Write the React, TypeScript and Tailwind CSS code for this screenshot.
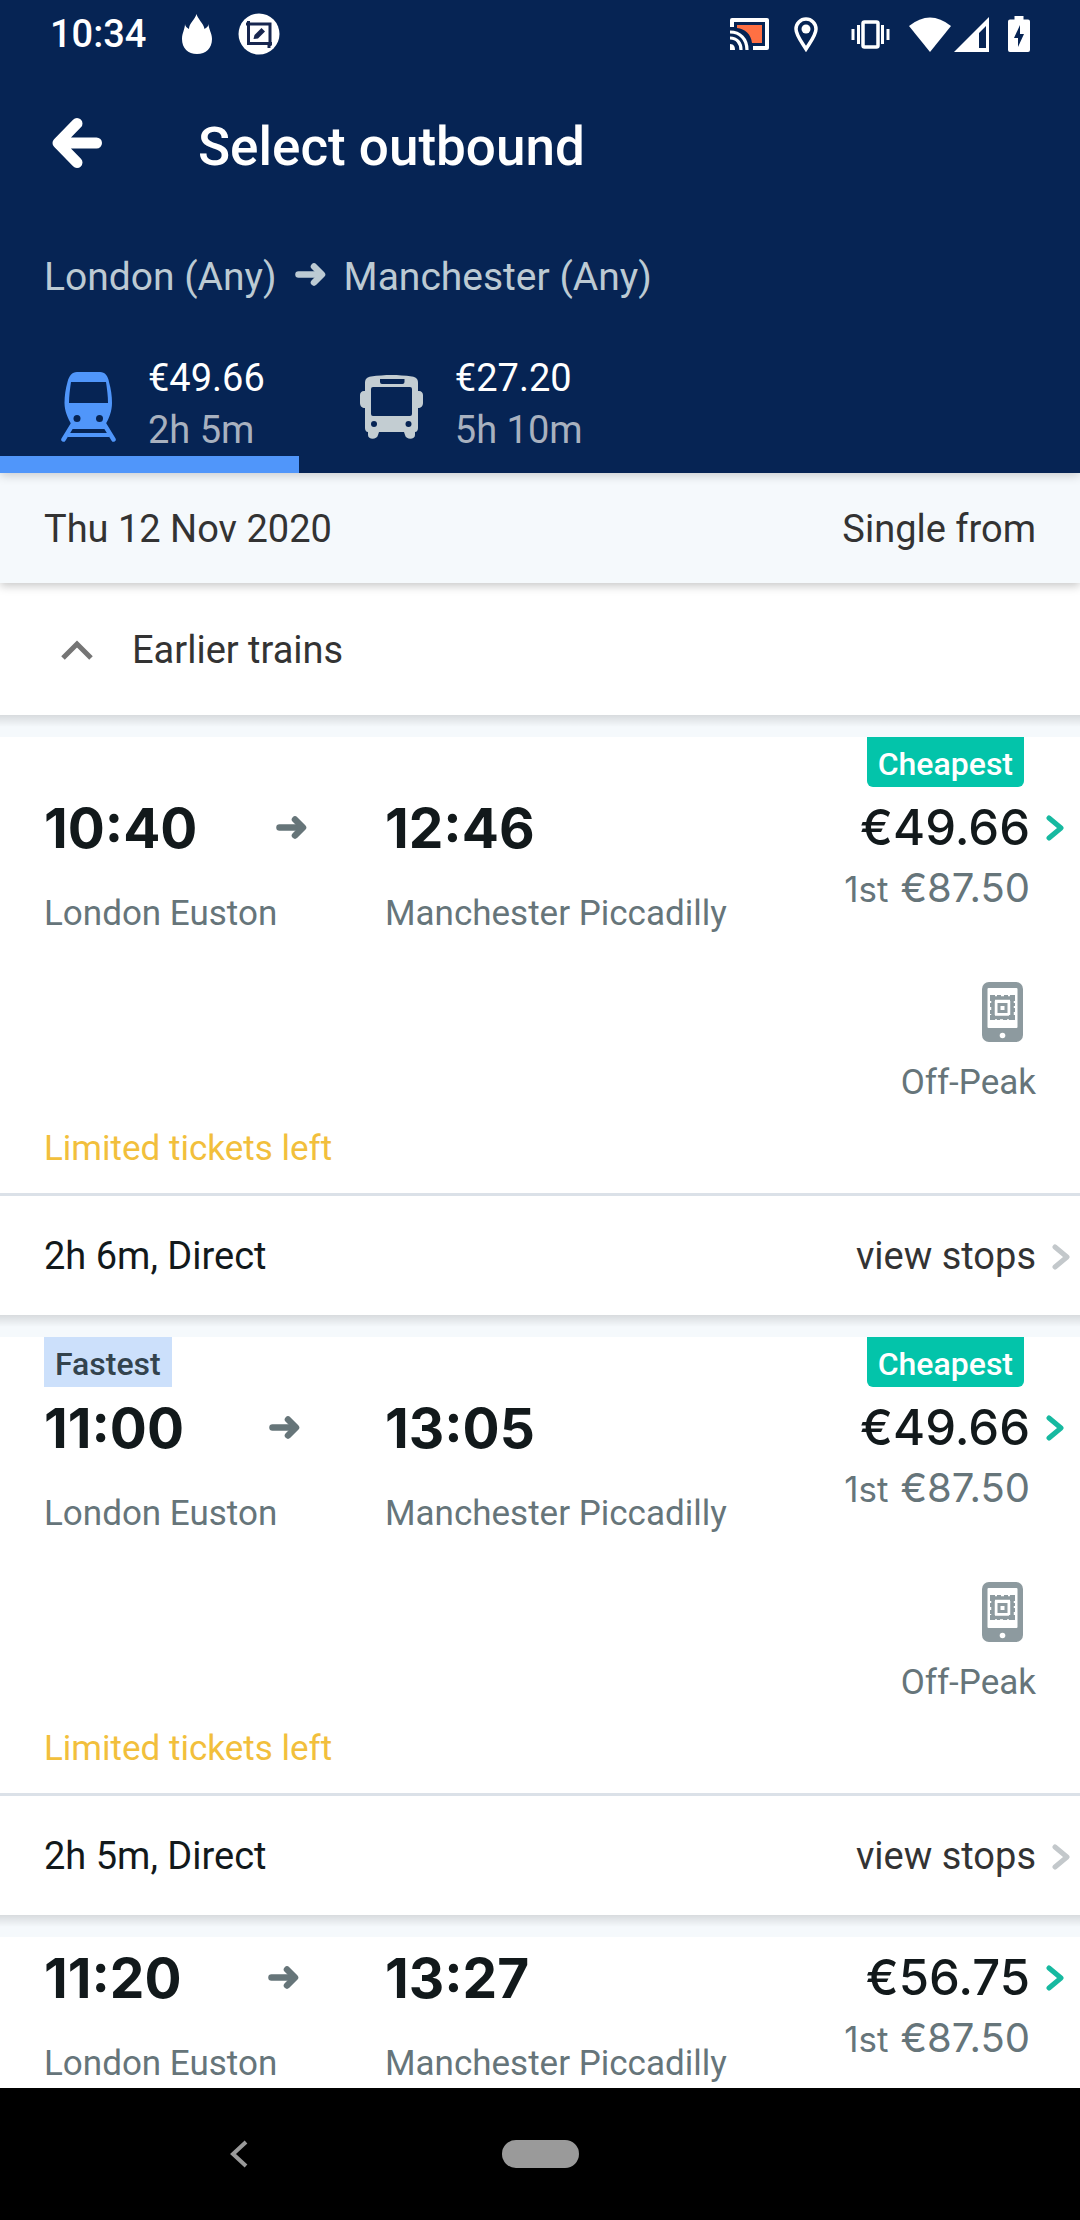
import clsx from 'clsx';

type Journey = {
  departs: string;
  arrives: string;
  from: string;
  to: string;
  price: string;
  firstClass: string;
  fastest?: boolean;
  cheapest?: boolean;
  fareType?: string;
  notice?: string;
  summary?: string;
};

const journeys: Journey[] = [
  {
    departs: '10:40',
    arrives: '12:46',
    from: 'London Euston',
    to: 'Manchester Piccadilly',
    price: '€49.66',
    firstClass: '€87.50',
    cheapest: true,
    fareType: 'Off-Peak',
    notice: 'Limited tickets left',
    summary: '2h 6m, Direct',
  },
  {
    departs: '11:00',
    arrives: '13:05',
    from: 'London Euston',
    to: 'Manchester Piccadilly',
    price: '€49.66',
    firstClass: '€87.50',
    fastest: true,
    cheapest: true,
    fareType: 'Off-Peak',
    notice: 'Limited tickets left',
    summary: '2h 5m, Direct',
  },
  {
    departs: '11:20',
    arrives: '13:27',
    from: 'London Euston',
    to: 'Manchester Piccadilly',
    price: '€56.75',
    firstClass: '€87.50',
  },
];

function ShortArrow({ className }: { className?: string }) {
  return (
    <svg viewBox="0 0 31 24" className={clsx('h-6 w-[31px] shrink-0', className)} fill="none" aria-hidden="true">
      <path d="M3.500 11.500H24" stroke="currentColor" strokeWidth="6.500" strokeLinecap="round" />
      <path d="M19 3.500 27 11.500l-8 8" stroke="currentColor" strokeWidth="6.500" strokeLinecap="round" strokeLinejoin="round" />
    </svg>
  );
}

function Chevron({ className }: { className?: string }) {
  return (
    <svg viewBox="0 0 18 26" className={clsx('h-[26px] w-[18px] shrink-0', className)} fill="none" aria-hidden="true">
      <path d="M3 3 15 13 3 23" stroke="currentColor" strokeWidth="5" strokeLinecap="round" strokeLinejoin="round" />
    </svg>
  );
}

function TrainIcon() {
  return (
    <svg viewBox="0 0 55 70" className="h-[70px] w-[55px] shrink-0" aria-hidden="true">
      <path
        fill="currentColor"
        fillRule="evenodd"
        d="M16 0h23c5 0 8 4 9 10 2 7 3 14 3 21 0 8-3 16-7 22H11C7 47 3.500 39 3.500 31c0-7 1-14 3-21C8 4 11 0 16 0zM10 10C9 17 8 24 8 31h39c0-7-1-14-2-21z"
      />
      <path d="M12 52 2.500 67.500M43 52 52.500 67.500" stroke="currentColor" strokeWidth="4.500" strokeLinecap="round" />
      <path d="M10 55h35M7 63h41" stroke="currentColor" strokeWidth="4" />
      <circle cx="16" cy="46.500" r="3.500" fill="#062454" />
      <circle cx="38.500" cy="46.500" r="3.500" fill="#062454" />
    </svg>
  );
}

function BusIcon() {
  return (
    <svg viewBox="0 0 63 64" className="h-16 w-[63px] shrink-0" aria-hidden="true">
      <path
        fill="currentColor"
        fillRule="evenodd"
        d="M5 8c0-4 2-6 6-6.500C25-.5 38-.5 52 1.500c4 .5 6 2.500 6 6.500v8h1c2.500 0 4 2 4 4v8c0 3-2 5-5 5v20c0 2-1 4-3 4v3c0 5-9 5-10 0l-1-3H19l-1 3c-1 5-10 5-10 0v-3c-2 0-3-2-3-4V33c-3 0-5-2-5-5v-8c0-2 1.500-4 4-4h1zm15-4v3q0 2 2 2h20.500q2 0 2-2V4zM13 12q-2 0-2 2v25q0 2 2 2h37q2 0 2-2V14q0-2-2-2z"
      />
      <circle cx="14" cy="49" r="3" fill="#062454" />
      <circle cx="48.500" cy="49" r="3" fill="#062454" />
    </svg>
  );
}

function MobileTicketIcon() {
  return (
    <svg viewBox="0 0 41 60" className="h-[60px] w-[41px]" role="img" aria-label="Mobile ticket">
      <rect width="41" height="60" rx="7" fill="#8d9a9f" />
      <rect x="5.500" y="6" width="30" height="40" rx="1" fill="#fff" />
      <circle cx="20.500" cy="53.500" r="2.800" fill="#fff" />
      <rect x="11" y="16" width="19" height="19.500" fill="none" stroke="#8d9a9f" strokeWidth="3.500" />
      <path
        d="M8 13h5v6H8zM15 13h4v4h-4zM22 13h4v4h-4zM28 13h5v6h-5zM8 21h4v4H8zM29 21h4v3h-4zM29 26h4v4h-4zM8 28h4v4H8zM8 33h5v5H8zM15 34h3v4h-3zM21 34h4v4h-4zM27 33h6v5h-6z"
        fill="#8d9a9f"
      />
      <rect x="17" y="22.500" width="7" height="7" fill="none" stroke="#8d9a9f" strokeWidth="3" />
    </svg>
  );
}

function StatusBar() {
  return (
    <div className="flex h-[68px] items-center justify-between pr-[50px] pl-[50px]">
      <div className="flex items-center">
        <span className="text-[38px] leading-[68px] font-medium">10:34</span>
        <svg viewBox="0 0 30 40" className="ml-9 h-10 w-[30px]" fill="currentColor" aria-hidden="true">
          <path d="M14.500 0c1 5 7 9 8 15 2-1 4-3 4-5 0 5 3.500 9 3.500 15 0 9-6 15-15 15S0 34 0 25c0-6 3-10 3-15 0 2 2 4 4 5 0-6 6-9 7.500-15z" />
        </svg>
        <svg viewBox="0 0 42 42" className="ml-[26px] size-[42px]" fill="none" aria-hidden="true">
          <circle cx="21" cy="21" r="20.500" fill="#fff" />
          <path d="M8 11h24v22M10.500 8v22.500H34M31 31v4" stroke="#17264f" strokeWidth="3" />
          <path d="m15.500 26 1-4 7-7 3.500 3.500-7 7z" fill="#17264f" />
        </svg>
      </div>
      <div className="flex items-center">
        <svg viewBox="0 0 39 32" className="h-8 w-[39px]" fill="none" aria-hidden="true">
          <path d="M7 7h25v18H22C21 16 15 11 7 10z" fill="#ff7043" />
          <path d="M2 9V2h35v28H23" stroke="#fff" strokeWidth="4" strokeLinejoin="round" />
          <path d="M0 14c10 0 17 7 17 18M0 20c7 0 11 5 11 12" stroke="#fff" strokeWidth="3.200" />
          <path d="M0 26c4 0 5 3 5 6H0z" fill="#fff" />
        </svg>
        <svg viewBox="0 0 24 35" className="ml-[25px] h-[35px] w-6" fill="none" aria-hidden="true">
          <path d="M12 32C7 24 2 18 2 12a10 10 0 0 1 20 0c0 6-5 12-10 20z" stroke="#fff" strokeWidth="3.500" />
          <circle cx="12" cy="12" r="4.500" fill="#fff" />
        </svg>
        <svg viewBox="0 0 39 29" className="ml-[33px] h-[29px] w-[39px]" fill="none" stroke="#fff" aria-hidden="true">
          <rect x="12" y="2" width="15" height="25" rx="1.500" strokeWidth="3.500" />
          <path d="M7.500 5v19M31.500 5v19" strokeWidth="3" />
          <path d="M2 9v11M37 9v11" strokeWidth="3" />
        </svg>
        <svg viewBox="0 0 42 35" className="ml-[19px] h-[35px] w-[42px]" fill="#fff" aria-hidden="true">
          <path d="M21 35 0 9Q21-8 42 9z" />
        </svg>
        <svg viewBox="0 0 36 35" className="ml-[3px] h-[35px] w-9" aria-hidden="true">
          <path fill="#fff" fillRule="evenodd" d="M0 35 35 0v35zM25 16v15h7V9z" />
        </svg>
        <svg viewBox="0 0 22 36" className="ml-[18px] h-9 w-[22px]" fill="#fff" aria-hidden="true">
          <path fillRule="evenodd" d="M6.500 0h9v3.500H20q2 0 2 2V34q0 2-2 2H2q-2 0-2-2V5.500q0-2 2-2h4.500zM12 9 6 22h4v9l6-13h-4z" />
        </svg>
      </div>
    </div>
  );
}

function Header() {
  return (
    <header className="relative z-10 shrink-0 bg-[#062454] text-white shadow-[0_2px_10px_rgba(0,0,0,0.2)]">
      <StatusBar />
      <div className="flex h-[154px] items-center gap-24 pb-1 pl-[52px]">
        <button type="button" aria-label="Back">
          <svg viewBox="0 0 50 50" className="size-[50px]" fill="none" aria-hidden="true">
            <path d="M44.500 25H8M25 5.500 6 25l19 19.500" stroke="#fff" strokeWidth="11" strokeLinecap="round" strokeLinejoin="round" />
          </svg>
        </button>
        <h1 className="pt-2 text-[53px] leading-[64px] font-medium">Select outbound</h1>
      </div>
      <div className="flex h-32 items-start gap-[18px] px-11 text-[39px] leading-[110px] text-[#bccad3]">
        <span>London (Any)</span>
        <ShortArrow className="mt-[41px]" />
        <span>Manchester (Any)</span>
      </div>
      <div role="tablist" className="flex text-[38px] leading-[52px]">
        <button type="button" role="tab" aria-selected="true" className="border-b-[17px] border-[#5096fa] pt-0.5 text-left">
          <span className="flex items-center gap-8 pr-[34px] pl-[61px]">
            <span className="mt-1.5 text-[#5096fa]">
              <TrainIcon />
            </span>
            <span>
              <span className="block">€49.66</span>
              <span className="block text-[#a8b1bf]">2h 5m</span>
            </span>
          </span>
        </button>
        <button type="button" role="tab" aria-selected="false" className="border-b-[17px] border-transparent pt-0.5 text-left">
          <span className="flex items-center gap-8 pr-[34px] pl-[61px]">
            <span className="mt-1.5 text-[#c3cdd2]">
              <BusIcon />
            </span>
            <span>
              <span className="block">€27.20</span>
              <span className="block text-[#a8b1bf]">5h 10m</span>
            </span>
          </span>
        </button>
      </div>
    </header>
  );
}

function JourneyCard({ journey }: { journey: Journey }) {
  const hasBadges = journey.fastest || journey.cheapest;

  return (
    <article className="border-t-[22px] border-[#f5f9fc] bg-white">
      {hasBadges && (
        <div className="flex h-[50px] pr-14 pl-11 text-[32px] leading-[54px] font-medium">
          {journey.fastest && <span className="bg-[#cce0fb] px-[11px] text-[#33434d]">Fastest</span>}
          {journey.cheapest && <span className="ml-auto rounded-b-md bg-[#03c4aa] px-[11px] text-white">Cheapest</span>}
        </div>
      )}

      <div className="flex pl-11">
        <div className="w-[341px] shrink-0">
          <div className="flex items-center font-[Inter] text-[55px] leading-[82px] font-bold text-[#12191b]">
            <time>{journey.departs}</time>
            <span className="flex flex-1 justify-center text-[#667579]">
              <ShortArrow />
            </span>
          </div>
          <p className="mt-5 text-[35px] leading-[50px] text-[#66757a]">{journey.from}</p>
        </div>
        <div className="flex-1">
          <time className="block font-[Inter] text-[55px] leading-[82px] font-bold text-[#12191b]">{journey.arrives}</time>
          <p className="mt-5 text-[35px] leading-[50px] whitespace-nowrap text-[#66757a]">{journey.to}</p>
        </div>
        <div className="text-right font-[Inter]">
          <button
            type="button"
            className="flex w-full items-center justify-end gap-4 pr-4 text-[49px] leading-[82px] font-medium text-[#12191b]"
          >
            {journey.price}
            <Chevron className="text-[#17b9a0]" />
          </button>
          <p className="pr-[50px] text-[40px] leading-[38px] text-[#66757a]">
            <span className="mr-3 text-[35px]">1st</span>
            {journey.firstClass}
          </p>
        </div>
      </div>

      {journey.fareType && (
        <div className="mt-[43px] flex flex-col items-end pr-11">
          <div className="pr-[13px]">
            <MobileTicketIcon />
          </div>
          <p className="mt-[17px] text-[35px] leading-[48px] text-[#66757a]">{journey.fareType}</p>
        </div>
      )}
      {journey.notice && (
        <p className="mt-[18px] px-11 pb-5 text-[35px] leading-[48px] text-[#f2bf3c]">{journey.notice}</p>
      )}

      {journey.summary && (
        <div className="flex items-center justify-between border-t-[3px] border-[#dbe1e8] pt-0.5 pr-[10px] pl-11 text-[38px] leading-[117px]">
          <span className="text-[#12191b]">{journey.summary}</span>
          <button type="button" className="flex items-center gap-4 text-[#333333]">
            view stops
            <Chevron className="text-[#c3c8cb]" />
          </button>
        </div>
      )}
    </article>
  );
}

export default function App() {
  return (
    <div className="flex h-screen flex-col bg-[#f5f9fc] font-[Roboto,sans-serif]">
      <Header />

      <main className="min-h-0 flex-1 overflow-hidden text-[38px] text-[#333333]">
        <div className="relative flex justify-between bg-[#f5f9fc] px-11 pt-0.5 leading-[108px] shadow-[0_3px_9px_rgba(0,0,0,0.22)]">
          <span>Thu 12 Nov 2020</span>
          <span>Single from</span>
        </div>
        <button
          type="button"
          className="flex w-full items-center gap-[39px] bg-white pt-0.5 pl-[61px] leading-[130px]"
        >
          <svg viewBox="0 0 32 20" className="h-5 w-8" fill="none" aria-hidden="true">
            <path d="M2 18 16 4l14 14" stroke="#757575" strokeWidth="5" />
          </svg>
          Earlier trains
        </button>

        {journeys.map((journey) => (
          <div key={journey.departs} className="relative">
            <JourneyCard journey={journey} />
            {/* Shadow cast by the row above */}
            <div className="absolute inset-x-0 top-0 h-3 bg-linear-to-b from-black/12 to-transparent" />
          </div>
        ))}
      </main>

      <nav className="grid h-[132px] shrink-0 grid-cols-[1fr_auto_1fr] items-center bg-black">
        <div className="flex justify-center pr-6">
          <button type="button" aria-label="Back">
            <svg viewBox="0 0 18 28" className="h-7 w-[18px]" fill="none" aria-hidden="true">
              <path d="M16 2 3 14l13 12" stroke="#9a9a9a" strokeWidth="4" />
            </svg>
          </button>
        </div>
        <button type="button" aria-label="Home" className="h-7 w-[77px] rounded-full bg-[#9a9a9a]" />
      </nav>
    </div>
  );
}
